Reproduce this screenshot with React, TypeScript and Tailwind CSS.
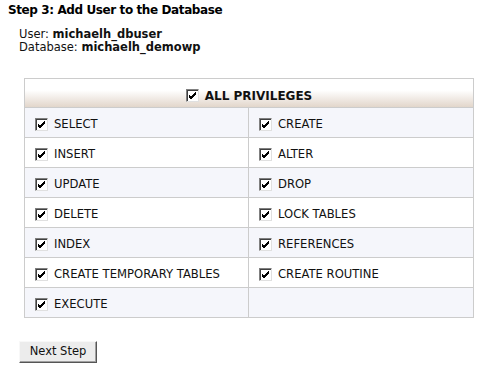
const privileges: [string, string | null][] = [
  ["SELECT", "CREATE"],
  ["INSERT", "ALTER"],
  ["UPDATE", "DROP"],
  ["DELETE", "LOCK TABLES"],
  ["INDEX", "REFERENCES"],
  ["CREATE TEMPORARY TABLES", "CREATE ROUTINE"],
  ["EXECUTE", null],
];

function Check() {
  return (
    <span className="inline-flex h-[13px] w-[13px] shrink-0 items-center justify-center border border-t-[#808080] border-l-[#808080] border-b-[#e0e0e0] border-r-[#e0e0e0] bg-white shadow-[inset_1px_1px_0_#404040]">
      <svg width="9" height="9" viewBox="0 0 9 9">
        <path d="M1 4 L3 6 L8 1 M1 5 L3 7 L8 2 M1 6 L3 8 L8 3" stroke="#000" strokeWidth="1" fill="none" />
      </svg>
    </span>
  );
}

function Cell({ label, shade }: { label: string | null; shade: boolean }) {
  return (
    <div className={`flex h-[29px] items-center gap-[6px] px-[10px] pt-[3px] ${shade ? "bg-[#f5f6fb]" : "bg-white"}`}>
      {label && (
        <>
          <Check />
          <span className="pt-[1px] text-[11.6px] text-[#111]">{label}</span>
        </>
      )}
    </div>
  );
}

export default function App() {
  return (
    <div className="h-[381px] w-[488px] bg-white pl-[8px] pt-[2px] font-['DejaVu_Sans','Verdana',sans-serif] text-black">
      <h2 className="text-[12px] font-bold leading-[16px] tracking-[-0.4px]">Step 3: Add User to the Database</h2>
      <div className="mt-[10px] pl-[11px] text-[11.5px] leading-[13px] text-[#111]">
        <div>
          User: <b>michaelh_dbuser</b>
        </div>
        <div>
          Database: <b>michaelh_demowp</b>
        </div>
      </div>

      <div className="ml-[16px] mt-[24px] w-[450px] border border-[#cccccc]">
        <div className="flex h-[28px] items-center justify-center gap-[6px] bg-gradient-to-b from-white from-40% to-[#e2d6cb] pt-[5px]">
          <Check />
          <span className="text-[12px] font-bold text-[#111]">ALL PRIVILEGES</span>
        </div>
        {privileges.map(([a, b], i) => (
          <div key={a} className="grid grid-cols-[224px_1fr] border-t border-[#cccccc]">
            <div className="border-r border-[#cccccc]">
              <Cell label={a} shade={i % 2 === 0} />
            </div>
            <Cell label={b} shade={i % 2 === 0} />
          </div>
        ))}
      </div>

      <button className="ml-[11px] mt-[23px] h-[22px] w-[78px] border border-t-[#f8f8f8] border-l-[#f8f8f8] border-b-[#555] border-r-[#555] bg-[#ececec] text-[11.5px] text-[#111] shadow-[inset_-1px_-1px_0_#a0a0a0]">
        Next Step
      </button>
    </div>
  );
}
